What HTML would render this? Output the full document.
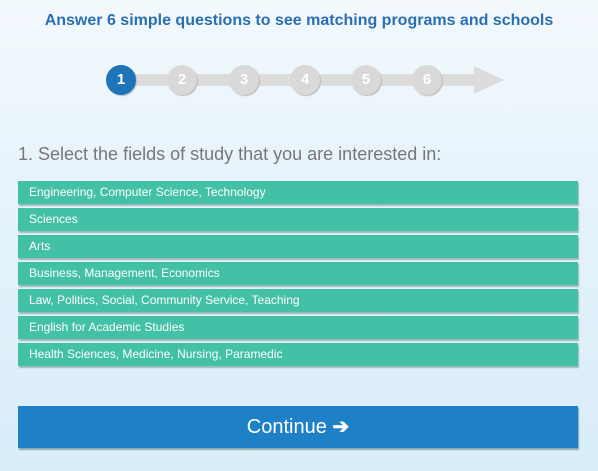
<!DOCTYPE html><html><head><style>
body{margin:0;width:598px;height:471px;overflow:hidden;font-family:"Liberation Sans",sans-serif;background:linear-gradient(180deg,#f3f9fd 0%,#e6f3fb 40%,#d9edf8 100%);position:relative}
h1{position:absolute;top:12px;left:0;width:598px;text-align:center;margin:0;font-size:16px;font-weight:bold;color:#2a6fb2}
.c{position:absolute;top:65px;width:30px;height:30px;border-radius:50%;background:#d9d9d9;color:#fff;font-weight:bold;font-size:15px;text-align:center;line-height:30px;box-shadow:1px 1px 1px #bbb}
.q{position:absolute;top:144px;left:18px;font-size:18px;color:#777}
.r{position:absolute;left:18px;width:560px;height:23px;background:#43c1a6;color:#fff;font-size:12px;line-height:23px;box-sizing:border-box;padding-left:11px;box-shadow:1px 2px 1px #9bb}
.b{position:absolute;left:18px;top:406px;width:560px;height:42px;background:#1e80c6;color:#fff;font-size:20px;text-align:center;line-height:42px;box-shadow:1px 2px 1px #8aa}
</style></head><body>
<h1>Answer 6 simple questions to see matching programs and schools</h1>
<div style="position:absolute;left:121px;top:74px;width:355px;height:12px;background:#dcdcdc"></div>
<div style="position:absolute;left:474px;top:66px;width:0;height:0;border-top:14px solid transparent;border-bottom:14px solid transparent;border-left:30px solid #dcdcdc"></div>
<div class="c" style="left:106px;background:#1e74b8">1</div>
<div class="c" style="left:167px">2</div>
<div class="c" style="left:229px">3</div>
<div class="c" style="left:290px">4</div>
<div class="c" style="left:351px">5</div>
<div class="c" style="left:412px">6</div>
<div class="q">1. Select the fields of study that you are interested in:</div>
<div class="r" style="top:181px">Engineering, Computer Science, Technology</div>
<div class="r" style="top:208px">Sciences</div>
<div class="r" style="top:235px">Arts</div>
<div class="r" style="top:262px">Business, Management, Economics</div>
<div class="r" style="top:289px">Law, Politics, Social, Community Service, Teaching</div>
<div class="r" style="top:316px">English for Academic Studies</div>
<div class="r" style="top:343px">Health Sciences, Medicine, Nursing, Paramedic</div>
<div class="b">Continue <span style="font-weight:bold">➔</span></div>
</body></html>
